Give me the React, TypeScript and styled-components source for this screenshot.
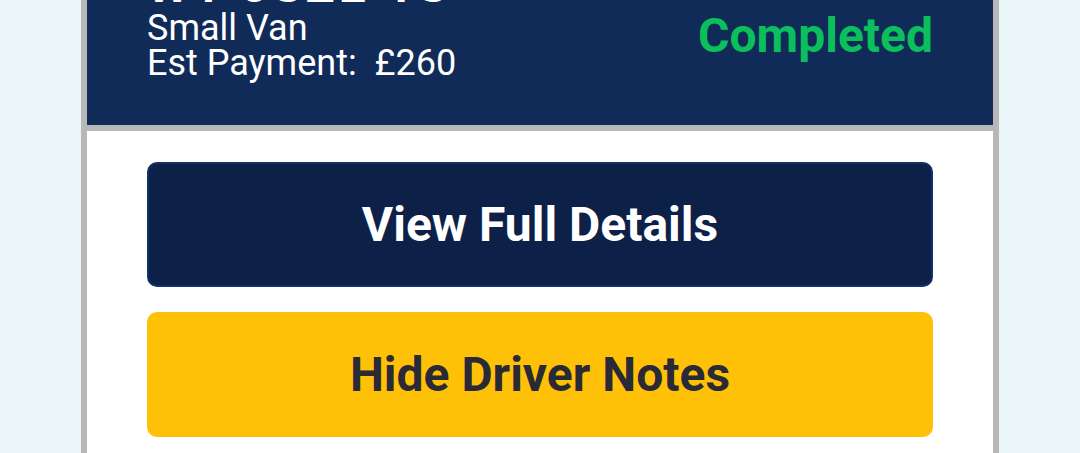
import React, { FC } from 'react';
import styled, { createGlobalStyle } from 'styled-components';

const GlobalStyle = createGlobalStyle`
  html, body {
    margin: 0;
    padding: 0;
    height: 100%;
    overflow: hidden;
    background: #eaf6f7;
    font-family: Roboto, 'Noto Sans', 'Liberation Sans', sans-serif;
  }
`;

const job = {
  postcode: 'W1 0SZE 1S',
  vehicle: 'Small Van',
  payment: '£260',
  status: 'Completed',
};

const App: FC = (): JSX.Element => {
  return (
    <>
      <GlobalStyle />
      <Page>
        <JobCard>
          <Header>
            <HeaderLeft>
              <Postcode>{job.postcode}</Postcode>
              <InfoLine>{job.vehicle}</InfoLine>
              <InfoLine>Est Payment:&nbsp; {job.payment}</InfoLine>
            </HeaderLeft>
            <Status>{job.status}</Status>
          </Header>
          <Actions>
            <ActionButton variant='navy'>View Full Details</ActionButton>
            <ActionButton variant='amber'>Hide Driver Notes</ActionButton>
          </Actions>
        </JobCard>
      </Page>
    </>
  );
};
export default App;

const Page = styled.div`
  display: flex;
  justify-content: center;
  padding: 0 81px;
`;

const JobCard = styled.div`
  flex: 1;
  margin-top: -52px;
  border: 6px solid #b8b8b8;
  border-top: none;
  background: #ffffff;
  min-height: 600px;
`;

const Header = styled.div`
  display: flex;
  justify-content: space-between;
  align-items: flex-start;
  padding: 13px 60px 44px;
  background: #112b59;
  border-bottom: 6px solid #b8b8b8;
`;

const HeaderLeft = styled.div`
  display: flex;
  flex-direction: column;
  color: #ffffff;
`;

const Postcode = styled.div`
  font-size: 48px;
  font-weight: 700;
  line-height: 50px;
  letter-spacing: 4px;
`;

const InfoLine = styled.div`
  font-size: 36px;
  line-height: 35px;
`;

const Status = styled.div`
  margin-top: 51px;
  font-size: 48px;
  font-weight: 700;
  line-height: 48px;
  color: #0bbf5c;
`;

const Actions = styled.div`
  display: flex;
  flex-direction: column;
  gap: 25px;
  padding: 31px 60px;
`;

const ActionButton = styled.button<{ variant: 'navy' | 'amber' }>`
  height: 125px;
  border-radius: 10px;
  border: 2px solid ${(p) => (p.variant === 'navy' ? '#12306a' : '#ffc107')};
  background: ${(p) => (p.variant === 'navy' ? '#0d2148' : '#ffc107')};
  color: ${(p) => (p.variant === 'navy' ? '#ffffff' : '#2a2a36')};
  font-family: Roboto, 'Noto Sans', 'Liberation Sans', sans-serif;
  font-size: 48px;
  font-weight: 700;
  cursor: pointer;
`;
